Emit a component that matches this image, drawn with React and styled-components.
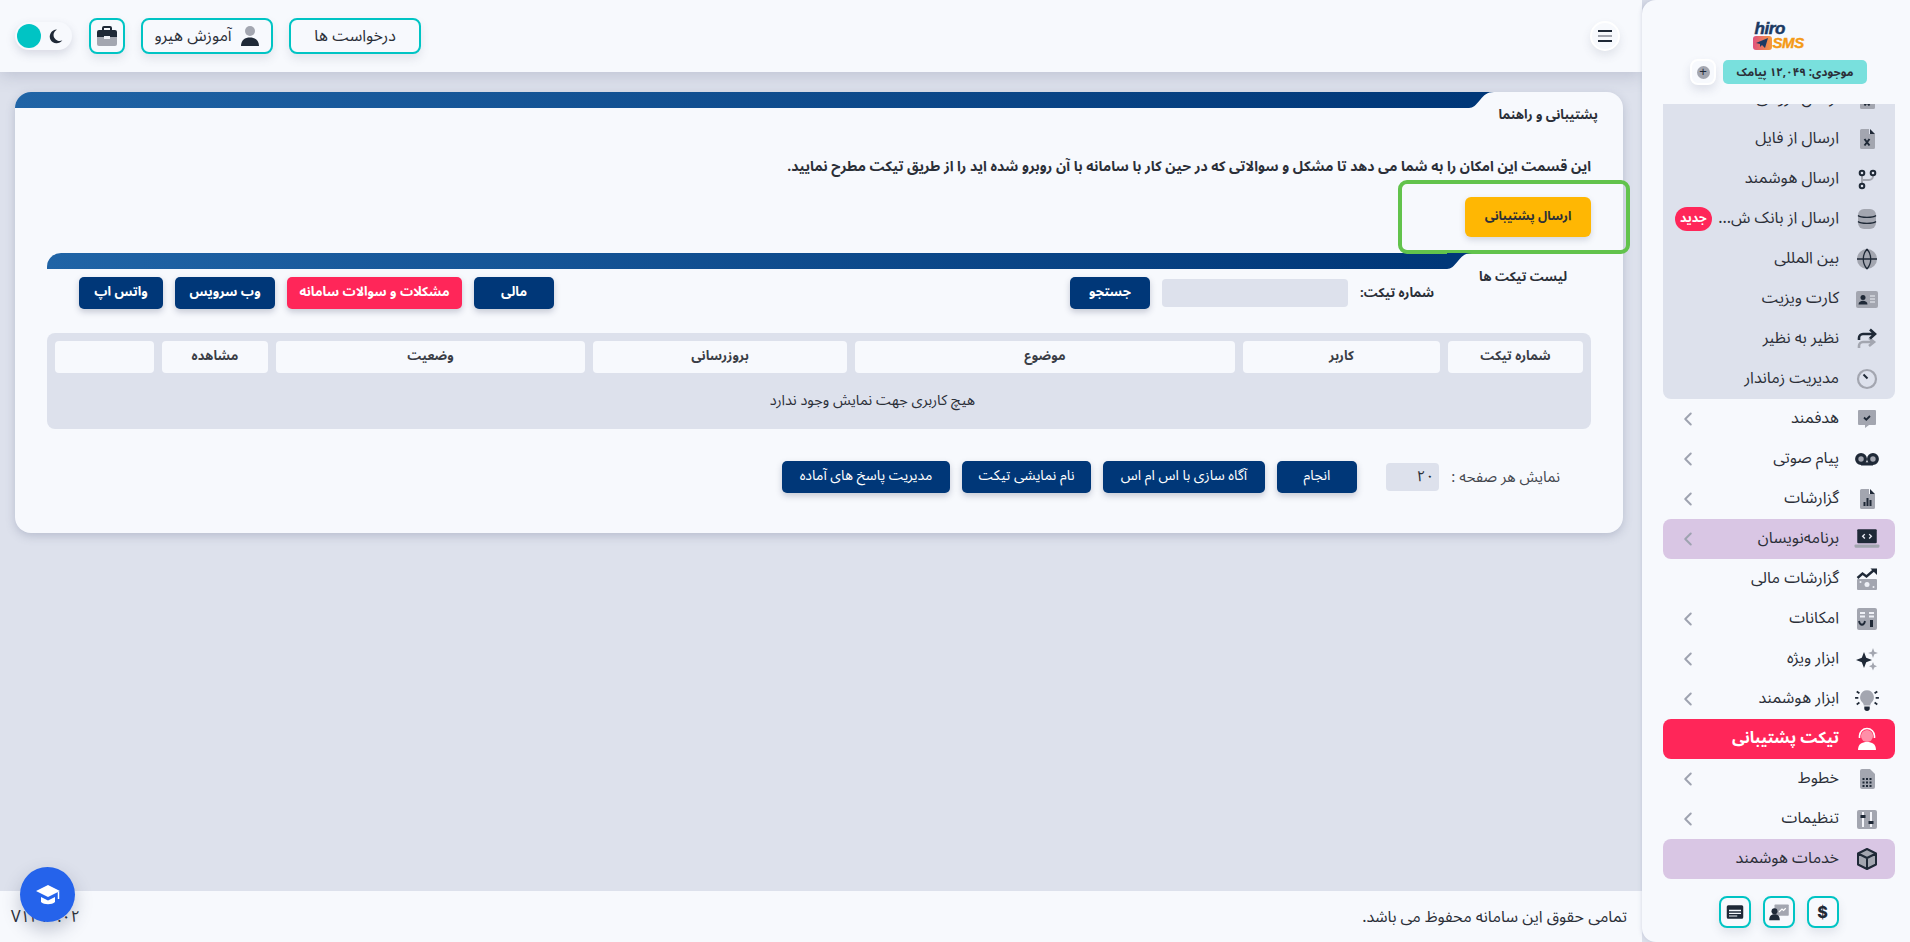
import React from 'react';
import styled, { createGlobalStyle } from 'styled-components';
import { ChevronLeft } from 'lucide-react';

const DARK = '#1f2937';
const GRAY = '#a3a6b0';
const NAVY = '#003778';
const TEAL = '#00c4c4';
const PINK = '#ff2659';

const GlobalStyle = createGlobalStyle`
  html, body {
    margin: 0;
    padding: 0;
    height: 100%;
    overflow: hidden;
    background: #dde1ec;
  }
  * { box-sizing: border-box; }
  body {
    font-family: "Noto Sans Arabic", Vazirmatn, "DejaVu Sans", Inter, sans-serif;
    color: #2b2f38;
  }
`;

const Duo = ({ children, size = 24 }) => (
  <svg width={size} height={size} viewBox="0 0 24 24" aria-hidden="true">
    {children}
  </svg>
);

const icons = {
  file: (
    <Duo>
      <path fill={GRAY} d="M5 3.500a1.500 1.500 0 0 1 1.500-1.500H14v5h6v13.500a1.500 1.500 0 0 1-1.500 1.500h-12A1.500 1.500 0 0 1 5 20.500z" />
      <path fill={DARK} d="M15 2l5 5h-5z" />
      <path stroke={DARK} strokeWidth="2" d="M9.500 12l5 6.500M14.500 12l-5 6.500" />
    </Duo>
  ),
  branch: (
    <Duo>
      <path fill="none" stroke={GRAY} strokeWidth="2" d="M7 8v8M18 8v1a4 4 0 0 1-4 4H7" />
      <g fill="none" stroke={DARK} strokeWidth="2">
        <circle cx="7" cy="6" r="2.300" />
        <circle cx="18" cy="6" r="2.300" />
        <circle cx="7" cy="19" r="2.300" />
      </g>
    </Duo>
  ),
  db: (
    <Duo>
      <rect x="3" y="2" width="18" height="20" rx="6" fill={GRAY} />
      <path fill="none" stroke={DARK} strokeWidth="1.400" d="M3 8.500c3 2.500 15 2.500 18 0M3 14.500c3 2.500 15 2.500 18 0" />
    </Duo>
  ),
  globe: (
    <Duo>
      <circle cx="12" cy="12" r="10" fill={GRAY} />
      <path fill="none" stroke={DARK} strokeWidth="1.300" d="M2 12h20M12 2c-5 6-5 14 0 20M12 2c5 6 5 14 0 20" />
    </Duo>
  ),
  card: (
    <Duo>
      <rect x="1" y="4" width="22" height="17" rx="2" fill={GRAY} />
      <circle cx="8" cy="10.500" r="2.500" fill={DARK} />
      <path fill={DARK} d="M3.500 17.500c0-5 9-5 9 0z" />
      <path stroke="#eef0f6" strokeWidth="1.200" d="M15 9h5M15 12h5M15 15h5" />
    </Duo>
  ),
  share: (
    <Duo>
      <path fill="none" stroke={GRAY} strokeWidth="2.600" d="M4 21v-2a4 4 0 0 1 4-4h10M14 11l5 4-5 4" />
      <path fill="none" stroke={DARK} strokeWidth="2.600" d="M4 13v-2a4 4 0 0 1 4-4h11M15 2.500l5 4.500-5 4.500" />
    </Duo>
  ),
  timer: (
    <Duo>
      <circle cx="12" cy="12" r="9" fill="none" stroke={GRAY} strokeWidth="2.200" />
      <path stroke={DARK} strokeWidth="2" d="M8.500 7.500l4 4" />
    </Duo>
  ),
  chat: (
    <Duo>
      <path fill={GRAY} d="M3 4a1 1 0 0 1 1-1h16a1 1 0 0 1 1 1v13a1 1 0 0 1-1 1h-6l-4 3v-3H4a1 1 0 0 1-1-1z" />
      <path fill="none" stroke={DARK} strokeWidth="1.800" d="M9 10.500l2.300 2.200L15 9" />
    </Duo>
  ),
  voicemail: (
    <Duo size={26}>
      <circle cx="6.500" cy="12" r="4" fill={GRAY} stroke={DARK} strokeWidth="3" />
      <circle cx="17.500" cy="12" r="4" fill={GRAY} stroke={DARK} strokeWidth="3" />
      <path stroke={DARK} strokeWidth="3" d="M6.500 16.500h11" />
    </Duo>
  ),
  bars: (
    <Duo>
      <path fill={GRAY} d="M5 3.500A1.500 1.500 0 0 1 6.500 2H14v5h6v13.500a1.500 1.500 0 0 1-1.500 1.500h-12A1.500 1.500 0 0 1 5 20.500z" />
      <path fill={DARK} d="M15 2l5 5h-5zM8.500 15h2v4h-2zM11.500 11h2v8h-2zM14.500 13h2v6h-2z" />
    </Duo>
  ),
  laptop: (
    <Duo size={26}>
      <rect x="3" y="3" width="18" height="13" rx="1" fill={DARK} />
      <rect x="0.500" y="17" width="23" height="3" rx="1" fill={GRAY} />
      <path fill="none" stroke="#e8e8f2" strokeWidth="1.300" d="M10 7.500l-2 2 2 2M14 7.500l2 2-2 2" />
    </Duo>
  ),
  money: (
    <Duo>
      <rect x="2" y="12" width="20" height="11" rx="1" fill={GRAY} />
      <circle cx="12" cy="17.500" r="2.500" fill="#eef0f6" />
      <circle cx="5.500" cy="15" r="1" fill="#eef0f6" />
      <circle cx="18.500" cy="20" r="1" fill="#eef0f6" />
      <path fill="none" stroke={DARK} strokeWidth="2.400" d="M2.500 11l5-4.500 4 3 7-6" />
      <path fill={DARK} d="M15.500 1.500H22V8z" />
    </Duo>
  ),
  tools: (
    <Duo>
      <rect x="2" y="1" width="20" height="22" rx="2" fill={GRAY} />
      <path stroke="#eef0f6" strokeWidth="1.800" d="M5 6h5M14 6h5M5 9.500h5M14 9.500h5" />
      <path fill="none" stroke={DARK} strokeWidth="1.800" d="M4 14c1 5 5 5 6 0" />
      <path stroke={DARK} strokeWidth="3" d="M16.500 13v7" />
    </Duo>
  ),
  sparkle: (
    <Duo>
      <path fill={DARK} d="M9 5l2.200 5.800L17 13l-5.800 2.200L9 21l-2.200-5.800L1 13l5.800-2.200z" />
      <path fill={GRAY} d="M18 1l1.300 3.700L23 6l-3.700 1.300L18 11l-1.300-3.700L13 6l3.700-1.300zM18 15l1.200 3 2.800 1.200-2.800 1.200-1.200 3-1.200-3-2.800-1.200 2.800-1.200z" />
    </Duo>
  ),
  bulb: (
    <Duo size={26}>
      <path fill={GRAY} d="M12 4a6.500 6.500 0 0 0-4 11.500c.7.700 1 1.500 1 2.500h6c0-1 .3-1.800 1-2.500A6.500 6.500 0 0 0 12 4z" />
      <path fill={DARK} d="M9.500 19h5v1.500a2.500 2.500 0 0 1-5 0z" />
      <path stroke={DARK} strokeWidth="1.600" d="M1 11h3M20 11h3M2.500 5l2.500 1.700M21.500 5 19 6.700M2.500 17 5 15.300M21.500 17 19 15.300" />
    </Duo>
  ),
  agent: (
    <Duo>
      <circle cx="12" cy="9" r="6" fill="#ff8fa8" />
      <path fill="none" stroke="#fff" strokeWidth="1.600" d="M4.500 11V9a7.500 7.500 0 0 1 15 0v2" />
      <path fill="#fff" d="M3 23c0-6 4-8 9-8s9 2 9 8z" />
    </Duo>
  ),
  sim: (
    <Duo>
      <path fill={GRAY} d="M5 4a2 2 0 0 1 2-2h8l5 5v13a2 2 0 0 1-2 2H7a2 2 0 0 1-2-2z" />
      <path stroke={DARK} strokeWidth="2" strokeDasharray="2 1.500" d="M7.500 12h10M7.500 15.500h10M7.500 19h10" />
    </Duo>
  ),
  sliders: (
    <Duo>
      <rect x="2" y="3" width="20" height="19" rx="2" fill={GRAY} />
      <path stroke="#f4f5fa" strokeWidth="2" d="M8 5v15M16 5v15" />
      <path stroke={DARK} strokeWidth="3" d="M5.500 9.500h5M13.500 15.500h5" />
    </Duo>
  ),
  box: (
    <Duo>
      <path fill={GRAY} d="M12 2l9 4.500v11L12 22l-9-4.500v-11z" />
      <path fill="none" stroke={DARK} strokeWidth="2" strokeLinejoin="round" d="M12 2l9 4.500v11L12 22l-9-4.500v-11zM3 6.500l9 4.500 9-4.500M12 11v11" />
    </Duo>
  ),
};

const submenu = [
  { label: 'ارسال گروهی', icon: 'file' },
  { label: 'ارسال از فایل', icon: 'file' },
  { label: 'ارسال هوشمند', icon: 'branch' },
  { label: 'ارسال از بانک ش...', icon: 'db', badge: 'جدید' },
  { label: 'بین المللی', icon: 'globe' },
  { label: 'کارت ویزیت', icon: 'card' },
  { label: 'نظیر به نظیر', icon: 'share' },
  { label: 'مدیریت زماندار', icon: 'timer' },
];

const menu = [
  { label: 'هدفمند', icon: 'chat', arrow: true },
  { label: 'پیام صوتی', icon: 'voicemail', arrow: true },
  { label: 'گزارشات', icon: 'bars', arrow: true },
  { label: 'برنامه‌نویسان', icon: 'laptop', arrow: true, tone: 'lilac' },
  { label: 'گزارشات مالی', icon: 'money' },
  { label: 'امکانات', icon: 'tools', arrow: true },
  { label: 'ابزار ویژه', icon: 'sparkle', arrow: true },
  { label: 'ابزار هوشمند', icon: 'bulb', arrow: true },
  { label: 'تیکت پشتیبانی', icon: 'agent', tone: 'active' },
  { label: 'خطوط', icon: 'sim', arrow: true },
  { label: 'تنظیمات', icon: 'sliders', arrow: true },
  { label: 'خدمات هوشمند', icon: 'box', tone: 'lilac' },
];

const columns = ['شماره تیکت', 'کاربر', 'موضوع', 'بروزرسانی', 'وضعیت', 'مشاهده', ''];

function NavRow({ label, icon, arrow, badge, tone }) {
  return (
    <Row $tone={tone}>
      <RowIcon>{icons[icon]}</RowIcon>
      <RowLabel $tone={tone}>{label}</RowLabel>
      {badge && <Badge>{badge}</Badge>}
      {arrow && <Chevron><ChevronLeft size={22} strokeWidth={2.2} /></Chevron>}
    </Row>
  );
}

export default function App() {
  return (
    <Shell>
      <GlobalStyle />
      <Sidebar>
        <Logo>
          <LogoTop>hiro</LogoTop>
          <LogoBottom>
            <LogoTile>
              <svg width="12" height="10" viewBox="0 0 12 10"><path fill="#1c3a63" d="M0 5l12-5-3 10-3-3-2 2V6z" /></svg>
            </LogoTile>
            <LogoSms>SMS</LogoSms>
          </LogoBottom>
        </Logo>
        <Balance>
          <BalancePill>موجودی: ۱۲,۰۴۹ پیامک</BalancePill>
          <PlusButton><PlusDot>+</PlusDot></PlusButton>
        </Balance>
        <Nav>
          <SubMenu>
            {submenu.map((item) => <NavRow key={item.label} {...item} />)}
          </SubMenu>
          {menu.map((item) => <NavRow key={item.label} {...item} />)}
        </Nav>
        <SideActions>
          <SquareButton $bold>$</SquareButton>
          <SquareButton>
            <svg width="22" height="18" viewBox="0 0 28 24"><rect x="8" y="2" width="19" height="15" rx="1" fill={GRAY} /><path fill="none" stroke="#fff" strokeWidth="1.500" d="M14 12l4-4 2 2 3-3" /><circle cx="8" cy="11" r="4" fill={DARK} /><path fill={DARK} d="M1 23c0-6 3-8 7-8s7 2 7 8z" /></svg>
          </SquareButton>
          <SquareButton>
            <svg width="18" height="18" viewBox="0 0 24 24"><path fill={DARK} fillRule="evenodd" d="M3 3h18a2 2 0 0 1 2 2v14a2 2 0 0 1-2 2H3a2 2 0 0 1-2-2V5a2 2 0 0 1 2-2zm1 6v2h16V9zm0 4v1.500h16V13zm0 3.500V18h11v-1.500z" /></svg>
          </SquareButton>
        </SideActions>
      </Sidebar>

      <Main>
        <TopBar>
          <MenuButton>
            <MenuLine />
            <MenuLine $gray />
            <MenuLine />
          </MenuButton>
          <TopActions>
            <OutlineButton>درخواست ها</OutlineButton>
            <OutlineButton>
              <svg width="20" height="22" viewBox="0 0 20 22"><circle cx="10" cy="6" r="5" fill={GRAY} /><path fill={DARK} d="M1 21c0-6 4-8.500 9-8.500s9 2.500 9 8.500z" /></svg>
              آموزش هیرو
            </OutlineButton>
            <SquareButton $big>
              <svg width="22" height="20" viewBox="0 0 22 20"><path fill={GRAY} d="M1 11h20v7a2 2 0 0 1-2 2H3a2 2 0 0 1-2-2z" /><path fill={DARK} d="M1 6a2 2 0 0 1 2-2h3V2a2 2 0 0 1 2-2h6a2 2 0 0 1 2 2v2h3a2 2 0 0 1 2 2v5H1zM8 2v2h6V2z" /><rect x="8" y="10" width="6" height="3" fill="#eef0f6" /></svg>
            </SquareButton>
            <ThemeToggle>
              <svg width="15" height="15" viewBox="0 0 24 24"><path fill={DARK} d="M14 1a11 11 0 1 0 9 17 9.500 9.500 0 0 1-9-17z" /></svg>
              <ToggleKnob />
            </ThemeToggle>
          </TopActions>
        </TopBar>

        <Content>
          <Card>
            <Strip $radius={16}><StripBar $radius={16} /><StripCap /></Strip>
            <CardTitle>پشتیبانی و راهنما</CardTitle>
            <Description>این قسمت این امکان را به شما می دهد تا مشکل و سوالاتی که در حین کار با سامانه با آن روبرو شده اید را از طریق تیکت مطرح نمایید.</Description>
            <SendRow>
              <SendButton>
                ارسال پشتیبانی
                <Highlight />
              </SendButton>
            </SendRow>

            <ListPanel>
              <Strip><StripBar $radius={14} /><StripCap /></Strip>
              <FilterRow>
                <ListTitle>لیست تیکت ها</ListTitle>
                <SearchGroup>
                  <FieldLabel>شماره تیکت:</FieldLabel>
                  <TicketInput />
                  <NavyButton $w={80}>جستجو</NavyButton>
                </SearchGroup>
                <Tabs>
                  <NavyButton $w={80}>مالی</NavyButton>
                  <NavyButton $w={175} $active>مشکلات و سوالات سامانه</NavyButton>
                  <NavyButton $w={100}>وب سرویس</NavyButton>
                  <NavyButton $w={84}>واتس اپ</NavyButton>
                </Tabs>
              </FilterRow>

              <TicketTable>
                {columns.map((col, i) => <HeadCell key={i}>{col}</HeadCell>)}
                <EmptyCell>هیچ کاربری جهت نمایش وجود ندارد</EmptyCell>
              </TicketTable>

              <BottomRow>
                <PerPage>نمایش هر صفحه :</PerPage>
                <PerPageBox>۲۰</PerPageBox>
                <BottomActions>
                  <NavyButton $w={80} $thin>انجام</NavyButton>
                  <NavyButton $w={162} $thin>آگاه سازی با اس ام اس</NavyButton>
                  <NavyButton $w={129} $thin>نام نمایشی تیکت</NavyButton>
                  <NavyButton $w={168} $thin>مدیریت پاسخ های آماده</NavyButton>
                </BottomActions>
              </BottomRow>
            </ListPanel>
          </Card>
        </Content>

        <Footer>
          <span>تمامی حقوق این سامانه محفوظ می باشد.</span>
          <Version>V۱۲۱۰.۰۲</Version>
        </Footer>
      </Main>

      <HelpFab>
        <svg width="26" height="24" viewBox="0 0 26 24">
          <path fill="#fff" d="M13 2L1 8l12 6 12-6zM6 14v5c3 3 11 3 14 0v-5l-7 3.500z" />
          <path stroke="#fff" strokeWidth="1.500" d="M23.500 9v7" />
        </svg>
      </HelpFab>
    </Shell>
  );
}

const Shell = styled.div`
  direction: rtl;
  display: flex;
  width: 100%;
  height: 100vh;
  background: #dde1ec;
`;

const Sidebar = styled.aside`
  position: relative;
  z-index: 2;
  width: 268px;
  flex: none;
  display: flex;
  flex-direction: column;
  align-items: center;
  padding-left: 5px;
  background: #f7f9fd;
  border-radius: 14px 0 0 14px;
  box-shadow: 0 0 4px rgba(120, 130, 160, 0.3);
`;

const Logo = styled.div`
  direction: ltr;
  width: 52px;
  height: 28px;
  margin-top: 22px;
  font-family: "Liberation Sans", sans-serif;
  font-style: italic;
  font-weight: 700;
`;

const LogoTop = styled.div`
  font-size: 17px;
  line-height: 14px;
  letter-spacing: -0.4px;
  padding-left: 2px;
  color: #1c3a63;
  -webkit-text-stroke: 0.5px #1c3a63;
`;

const LogoBottom = styled.div`
  display: flex;
  align-items: center;
  gap: 1px;
  height: 14px;
`;

const LogoTile = styled.div`
  width: 19px;
  height: 14px;
  flex: none;
  display: flex;
  align-items: center;
  justify-content: center;
  border-radius: 3px;
  background: linear-gradient(90deg, #e0527f, #f59a3e);
`;

const LogoSms = styled.span`
  font-size: 15px;
  line-height: 14px;
  letter-spacing: -0.4px;
  color: #f49a16;
  -webkit-text-stroke: 0.4px #f49a16;
`;

const Balance = styled.div`
  display: flex;
  align-items: center;
  gap: 7px;
  margin-top: 9px;
  height: 26px;
`;

const BalancePill = styled.div`
  width: 144px;
  height: 24px;
  line-height: 24px;
  text-align: center;
  font-size: 11.500px;
  font-weight: 700;
  border-radius: 5px;
  background: #79e0dd;
`;

const PlusButton = styled.div`
  width: 26px;
  height: 26px;
  display: flex;
  align-items: center;
  justify-content: center;
  background: #f7f9fd;
  border: 2px solid #fff;
  border-radius: 8px;
  box-shadow: 0 5px 10px rgba(70, 80, 110, 0.14);
`;

const PlusDot = styled.span`
  width: 13px;
  height: 13px;
  line-height: 12px;
  text-align: center;
  font-family: "Liberation Sans", sans-serif;
  font-size: 13px;
  color: ${DARK};
  border-radius: 50%;
  background: ${GRAY};
`;

const Nav = styled.nav`
  width: 232px;
  height: 775px;
  margin-top: 19px;
  margin-right: 15px;
  align-self: flex-start;
  overflow: hidden;
`;

const SubMenu = styled.div`
  margin-top: -25px;
  border-radius: 8px;
  background: #dde1ec;
`;

const rowBackground = { lilac: '#d9c6e4', active: PINK };

const Row = styled.div`
  display: flex;
  align-items: center;
  height: 40px;
  padding: 0 13px 0 8px;
  border-radius: 8px;
  background: ${({ $tone }) => rowBackground[$tone] || 'transparent'};
`;

const RowIcon = styled.span`
  width: 30px;
  height: 26px;
  flex: none;
  display: flex;
  align-items: center;
  justify-content: center;
`;

const RowLabel = styled.span`
  margin-right: 13px;
  padding-bottom: 2px;
  font-size: 16px;
  white-space: nowrap;
  font-weight: ${({ $tone }) => ($tone === 'active' ? 700 : 400)};
  color: ${({ $tone }) => ($tone === 'active' ? '#fff' : '#2b2f38')};
`;

const Badge = styled.span`
  margin-right: auto;
  margin-left: 4px;
  padding: 0 5px;
  height: 24px;
  line-height: 23px;
  font-size: 12.500px;
  font-weight: 700;
  color: #fff;
  border-radius: 12px;
  background: ${PINK};
`;

const Chevron = styled.span`
  margin-right: auto;
  margin-left: 6px;
  display: flex;
  color: #9ea3b0;
`;

const SideActions = styled.div`
  display: flex;
  gap: 12px;
  margin-top: 17px;
`;

const SquareButton = styled.div`
  width: ${({ $big }) => ($big ? '36px' : '32px')};
  height: ${({ $big }) => ($big ? '36px' : '32px')};
  margin-left: ${({ $big }) => ($big ? '1px' : '0')};
  display: flex;
  align-items: center;
  justify-content: center;
  font-family: Inter, sans-serif;
  font-size: 16px;
  font-weight: ${({ $bold }) => ($bold ? 800 : 400)};
  color: ${DARK};
  background: #f7f9fd;
  border: 2px solid ${TEAL};
  border-radius: 8px;
  box-shadow: 0 5px 10px rgba(70, 80, 110, 0.12);
`;

const Main = styled.main`
  flex: 1;
  min-width: 0;
  display: flex;
  flex-direction: column;
`;

const TopBar = styled.header`
  height: 72px;
  flex: none;
  display: flex;
  align-items: center;
  justify-content: space-between;
  padding: 0 22px 0 15px;
  background: #f7f9fd;
  box-shadow: 0 3px 16px rgba(90, 100, 130, 0.25);
`;

const MenuButton = styled.div`
  width: 30px;
  height: 30px;
  display: flex;
  flex-direction: column;
  align-items: center;
  justify-content: center;
  gap: 3px;
  background: #f7f9fd;
  border: 2px solid #fff;
  border-radius: 50%;
  box-shadow: 0 5px 10px rgba(70, 80, 110, 0.12);
`;

const MenuLine = styled.span`
  width: 14px;
  height: 2px;
  background: ${({ $gray }) => ($gray ? GRAY : DARK)};
`;

const TopActions = styled.div`
  display: flex;
  align-items: center;
  gap: 16px;
`;

const OutlineButton = styled.div`
  width: 132px;
  height: 36px;
  display: flex;
  align-items: center;
  justify-content: center;
  gap: 8px;
  font-size: 16px;
  background: #f7f9fd;
  border: 2px solid ${TEAL};
  border-radius: 8px;
  box-shadow: 0 5px 10px rgba(70, 80, 110, 0.12);
`;

const ThemeToggle = styled.div`
  width: 57px;
  height: 28px;
  display: flex;
  align-items: center;
  justify-content: space-between;
  padding: 0 9px 0 2px;
  background: #f7f9fd;
  border-radius: 14px;
  box-shadow: 0 4px 10px rgba(70, 80, 110, 0.18);
`;

const ToggleKnob = styled.span`
  width: 24px;
  height: 24px;
  border-radius: 50%;
  background: ${TEAL};
`;

const Content = styled.div`
  flex: 1;
  min-height: 0;
  padding: 20px 19px 0 15px;
`;

const Card = styled.section`
  height: 441px;
  background: #f7f9fd;
  border-radius: 16px;
  box-shadow: 0 3px 10px rgba(100, 110, 140, 0.3);
`;

const Strip = styled.div`
  display: flex;
  flex-direction: row-reverse;
  justify-content: flex-end;
  height: 16px;
  margin-right: ${({ $radius }) => ($radius ? '129px' : '119px')};
`;

const StripBar = styled.div`
  flex: 1;
  background: linear-gradient(90deg, #2064a6, ${NAVY});
  border-top-left-radius: ${({ $radius }) => $radius}px;
`;

const StripCap = styled.div`
  width: 25px;
  flex: none;
  background: ${NAVY};
  clip-path: path('M0 0H25C18 0 15 3 11 8C7 13 4 16 0 16Z');
`;

const CardTitle = styled.h2`
  margin: 0;
  padding-right: 25px;
  height: 14px;
  line-height: 14px;
  font-size: 13px;
  font-weight: 700;
`;

const Description = styled.p`
  margin: 35px 0 0;
  padding-right: 32px;
  height: 20px;
  line-height: 20px;
  font-size: 14px;
  font-weight: 700;
  white-space: nowrap;
`;

const SendRow = styled.div`
  margin-top: 20px;
  padding-right: 32px;
  display: flex;
`;

const SendButton = styled.div`
  position: relative;
  width: 126px;
  height: 40px;
  line-height: 38px;
  text-align: center;
  font-size: 12.500px;
  font-weight: 700;
  background: #ffb703;
  border-radius: 6px;
  box-shadow: 0 3px 6px rgba(70, 80, 110, 0.2);
`;

const Highlight = styled.span`
  position: absolute;
  top: -17px;
  right: -39px;
  bottom: -17px;
  left: -67px;
  border: 4px solid #62c34c;
  border-radius: 9px;
  pointer-events: none;
`;

const ListPanel = styled.div`
  margin: 16px 32px 0;
`;

const FilterRow = styled.div`
  display: flex;
  align-items: flex-start;
`;

const ListTitle = styled.h3`
  margin: 0;
  padding-right: 24px;
  width: 157px;
  height: 16px;
  line-height: 16px;
  font-size: 13px;
  font-weight: 700;
  white-space: nowrap;
`;

const SearchGroup = styled.div`
  display: flex;
  align-items: center;
  margin-top: 8px;
`;

const FieldLabel = styled.span`
  width: 86px;
  font-size: 13px;
  font-weight: 700;
  white-space: nowrap;
`;

const TicketInput = styled.div`
  width: 186px;
  height: 28px;
  margin-left: 12px;
  background: #dde1ec;
  border-radius: 4px;
`;

const NavyButton = styled.div`
  width: ${({ $w }) => $w}px;
  height: 32px;
  line-height: 30px;
  flex: none;
  text-align: center;
  white-space: nowrap;
  font-size: ${({ $thin }) => ($thin ? '14px' : '13px')};
  font-weight: ${({ $thin }) => ($thin ? 400 : 700)};
  color: #fff;
  background: ${({ $active }) => ($active ? PINK : NAVY)};
  border-radius: 5px;
  box-shadow: 0 3px 6px rgba(50, 60, 90, 0.25);
`;

const Tabs = styled.div`
  display: flex;
  gap: 12px;
  margin: 8px auto 0 0;
  padding-left: 32px;
`;

const TicketTable = styled.div`
  display: grid;
  grid-template-columns: 135px 197px 380px 254px 309px 106px 99px;
  grid-template-rows: 32px 56px;
  gap: 0 8px;
  height: 96px;
  margin-top: 24px;
  padding: 8px;
  background: #dde1ec;
  border-radius: 8px;
`;

const HeadCell = styled.div`
  line-height: 30px;
  text-align: center;
  font-size: 13px;
  font-weight: 700;
  color: #3b3e46;
  background: #f7f9fd;
  border-radius: 4px;
`;

const EmptyCell = styled.div`
  grid-column: 1 / 7;
  align-self: center;
  margin-top: -2px;
  text-align: center;
  font-size: 14.500px;
`;

const BottomRow = styled.div`
  display: flex;
  align-items: center;
  margin-top: 32px;
  padding-right: 31px;
`;

const PerPage = styled.span`
  width: 109px;
  font-size: 15px;
  white-space: nowrap;
  color: #44474f;
`;

const PerPageBox = styled.div`
  width: 53px;
  height: 28px;
  line-height: 26px;
  margin-right: 12px;
  padding-right: 5px;
  font-size: 15px;
  background: #dde1ec;
  border-radius: 4px;
`;

const BottomActions = styled.div`
  display: flex;
  gap: 12px;
  margin-right: 29px;
`;

const Footer = styled.footer`
  height: 51px;
  flex: none;
  display: flex;
  align-items: center;
  justify-content: space-between;
  padding: 0 15px 0 11px;
  font-size: 16px;
  background: #f7f9fd;
`;

const Version = styled.span`
  direction: ltr;
  font-size: 16px;
`;

const HelpFab = styled.div`
  position: fixed;
  left: 20px;
  top: 867px;
  z-index: 3;
  width: 55px;
  height: 55px;
  display: flex;
  align-items: center;
  justify-content: center;
  background: #2563eb;
  border-radius: 50%;
  box-shadow: 0 8px 18px rgba(50, 60, 90, 0.28);
`;
